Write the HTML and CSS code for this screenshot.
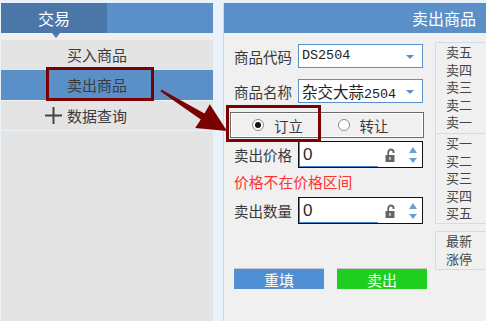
FILE: index.html
```html
<!DOCTYPE html>
<html lang="zh-CN">
<head>
    <meta charset="UTF-8">
    <title>卖出商品</title>
    <link rel="stylesheet" href="styles.css">
</head>
<body>

<div class="page">
    <div class="side">
        <div class="side-head"><div class="tab">交易</div></div>
        <div class="side-strip"></div>
        <div class="menu-item">买入商品</div>
        <div class="menu-item active">卖出商品</div>
        <div class="menu-item group">
            <svg class="plus" width="17" height="17" viewBox="0 0 17 17"><rect x="0" y="7.5" width="17" height="2" fill="#444"/><rect x="7.5" y="0" width="2" height="17" fill="#444"/></svg>数据查询
        </div>
        <div class="side-rest"></div>
    </div>

    <div class="main">
        <div class="main-head">卖出商品</div>
        <div class="main-body">
            <div class="form">
                <div class="row first">
                    <span class="label">商品代码</span>
                    <div class="select">DS2504<i class="caret"></i></div>
                </div>
                <div class="row">
                    <span class="label">商品名称</span>
                    <div class="select"><span class="cjk">杂交大蒜</span>2504<i class="caret"></i></div>
                </div>
                <div class="trade-type">
                    <label class="radio"><i class="dot checked"></i>订立</label>
                    <label class="radio"><i class="dot"></i>转让</label>
                </div>
                <div class="row price">
                    <span class="label">卖出价格</span>
                    <div class="spin-input">
                        <span class="field">0</span>
                        <svg class="lock" width="11" height="14" viewBox="0 0 11 14"><path d="M3.2 7V4.2a2.7 2.7 0 0 1 5.4 0V5" fill="none" stroke="#666" stroke-width="1.8"/><rect x="0.5" y="7" width="9" height="7" fill="#666"/><rect x="4.3" y="9" width="1.4" height="3" fill="#ddd"/></svg>
                        <span class="spin"><i class="up"></i><i class="down"></i></span>
                    </div>
                </div>
                <div class="error">价格不在价格区间</div>
                <div class="row qty">
                    <span class="label">卖出数量</span>
                    <div class="spin-input">
                        <span class="field">0</span>
                        <svg class="lock" width="11" height="14" viewBox="0 0 11 14"><path d="M3.2 7V4.2a2.7 2.7 0 0 1 5.4 0V5" fill="none" stroke="#666" stroke-width="1.8"/><rect x="0.5" y="7" width="9" height="7" fill="#666"/><rect x="4.3" y="9" width="1.4" height="3" fill="#ddd"/></svg>
                        <span class="spin"><i class="up"></i><i class="down"></i></span>
                    </div>
                </div>
                <div class="buttons">
                    <button class="btn reset">重填</button>
                    <button class="btn sell">卖出</button>
                </div>
            </div>

            <div class="quote">
                <div class="quote-box">
                    <div class="quote-part sells">
                        <div>卖五</div><div>卖四</div><div>卖三</div><div>卖二</div><div>卖一</div>
                    </div>
                    <div class="quote-part buys">
                        <div>买一</div><div>买二</div><div>买三</div><div>买四</div><div>买五</div>
                    </div>
                </div>
                <div class="quote-box last">
                    <div>最新</div><div>涨停</div>
                </div>
            </div>
        </div>
    </div>

    <!-- выделение и стрелка поверх интерфейса -->
    <div class="mark mark-menu"></div>
    <div class="mark mark-radio"></div>
    <svg class="arrow" width="486" height="321" viewBox="0 0 486 321">
        <polygon points="161.3,89.6 204.5,113.4 209.8,104.3 227,131 195.2,128 200.8,119.4 160.7,91.4" fill="#7b0000"/>
    </svg>
</div>

</body>
</html>
```

FILE: styles.css
```css
* {
    box-sizing: border-box;
}
html, body {
    margin: 0;
}
body {
    background: #e9f1fa;
    font-family: "Noto Sans CJK SC", "Noto Sans", sans-serif;
    color: #3a3a3a;
    overflow: hidden;
}
.page {
    position: relative;
    display: flex;
    gap: 10px;
    height: 321px;
    padding: 3px 0 0 1px;
}

/* левое меню */
.side {
    width: 212px;
    display: flex;
    flex-direction: column;
    flex-shrink: 0;
}
.side-head {
    height: 30px;
    background: #5b8fc7;
}
.tab {
    width: 106px;
    height: 30px;
    background: #4a77a7;
    color: #fff;
    font-size: 16px;
    line-height: 30px;
    text-align: center;
}
.side-strip {
    position: relative;
    height: 7px;
    background: #efefef;
}
.side-strip::before {
    content: '';
    position: absolute;
    left: 51px;
    top: 0;
    border-left: 4px solid transparent;
    border-right: 4px solid transparent;
    border-top: 5px solid #4a77a7;
}
.menu-item {
    height: 30px;
    line-height: 30px;
    padding-left: 66px;
    background: #e4e4e4;
    font-size: 15px;
    color: #3c3c3c;
}
.menu-item.active {
    background: #5b8fc7;
}
.menu-item.group {
    display: flex;
    align-items: center;
    padding-left: 44px;
    border-top: 1px solid #f4f4f4;
}
.plus {
    margin-right: 5px;
}
.side-rest {
    flex: 1;
    background: #e4e4e4;
    border-top: 1px solid #e9f1fa;
}

/* основная панель */
.main {
    flex: 1;
    min-width: 0;
    display: flex;
    flex-direction: column;
    border-left: 1px solid #c8d8ec;
}
.main-head {
    height: 30px;
    line-height: 30px;
    padding-right: 10px;
    background: #5b8fc7;
    color: #fff;
    font-size: 16px;
    text-align: right;
}
.main-body {
    flex: 1;
    display: flex;
    background: #f0f0f0;
    overflow: hidden;
}
.form {
    width: 211px;
    flex-shrink: 0;
    padding: 11px 0 0 10px;
}
.row {
    display: flex;
    align-items: center;
    margin-top: 11px;
}
.row.first {
    margin-top: 0;
}
.label {
    width: 64px;
    font-size: 14.5px;
    color: #3a3a3a;
}
.select {
    position: relative;
    width: 125px;
    height: 24px;
    line-height: 22px;
    padding-left: 3px;
    background: #fff;
    border: 1px solid #5b8fc7;
    font-family: "Liberation Mono", monospace;
    font-size: 13.4px;
    color: #222;
}
.select .cjk {
    font-family: "Noto Sans CJK SC", sans-serif;
    font-size: 15.5px;
}
.caret {
    position: absolute;
    right: 8px;
    top: 10px;
    border-left: 4.5px solid transparent;
    border-right: 4.5px solid transparent;
    border-top: 4px solid #5b8fc7;
}

/* тип сделки */
.trade-type {
    display: flex;
    align-items: center;
    width: 194px;
    height: 26px;
    margin: 9px 0 0 -4px;
    padding-left: 21px;
    border: 1px solid #6a6a6a;
    box-shadow: inset 0 0 0 1px #fff;
}
.radio {
    display: flex;
    align-items: center;
    width: 100px;
    font-size: 14.5px;
    color: #3a3a3a;
}
.dot {
    position: relative;
    width: 12px;
    height: 12px;
    margin-right: 10px;
    border-radius: 50%;
    border: 1px solid #8a8a8a;
    background: #fff;
}
.dot.checked::after {
    content: '';
    position: absolute;
    left: 2px;
    top: 2px;
    width: 6px;
    height: 6px;
    border-radius: 50%;
    background: #111;
}

/* поля со стрелками */
.row.price {
    margin-top: 3px;
}
.row.qty {
    margin-top: 7px;
}
.spin-input {
    display: flex;
    align-items: center;
    width: 125px;
    height: 27px;
    background: #fff;
    border: 1px solid #111;
}
.field {
    width: 79px;
    height: 100%;
    padding-left: 3px;
    border-left: 1px solid #4a86c8;
    border-bottom: 1px solid #4a86c8;
    font-family: "Liberation Sans", sans-serif;
    font-size: 17px;
    line-height: 25px;
    color: #2a2a2a;
}
.lock {
    margin-left: 7px;
}
.spin {
    display: flex;
    flex-direction: column;
    gap: 5px;
    margin-left: 13px;
}
.spin i {
    border-left: 4px solid transparent;
    border-right: 4px solid transparent;
}
.spin .up {
    border-bottom: 6px solid #6aa0d8;
}
.spin .down {
    border-top: 5px solid #6aa0d8;
}
.error {
    margin-top: 6px;
    height: 16px;
    line-height: 16px;
    font-size: 14.8px;
    color: #ff3333;
}
.buttons {
    display: flex;
    gap: 13px;
    margin-top: 44px;
}
.btn {
    width: 90px;
    height: 21px;
    padding: 0;
    border: 0;
    border-top: 1px solid #c8c8c8;
    font-family: "Noto Sans CJK SC", sans-serif;
    font-size: 15px;
    line-height: 19px;
    color: #fff;
}
.btn.reset {
    background: #4f8fd3;
}
.btn.sell {
    background: #1fcf1f;
}

/* стакан справа */
.quote {
    flex: 1;
    padding-top: 9px;
}
.quote-box {
    padding-left: 10px;
    border: 1px solid #cddcf3;
    border-right: 0;
    font-size: 13px;
    line-height: 17.6px;
    color: #444;
}
.quote-part.sells {
    padding-bottom: 2px;
}
.quote-part.buys {
    margin-left: -10px;
    padding: 0 0 1px 10px;
    border-top: 1px solid #cddcf3;
}
.quote-box.last {
    margin-top: 7px;
    padding-bottom: 2px;
}

/* выделение */
.mark {
    position: absolute;
    border: 3px solid #7b0000;
}
.mark-menu {
    left: 46px;
    top: 67px;
    width: 108px;
    height: 34px;
}
.mark-radio {
    left: 226px;
    top: 105px;
    width: 95px;
    height: 37px;
}
.arrow {
    position: absolute;
    left: 0;
    top: 0;
    pointer-events: none;
}
```
